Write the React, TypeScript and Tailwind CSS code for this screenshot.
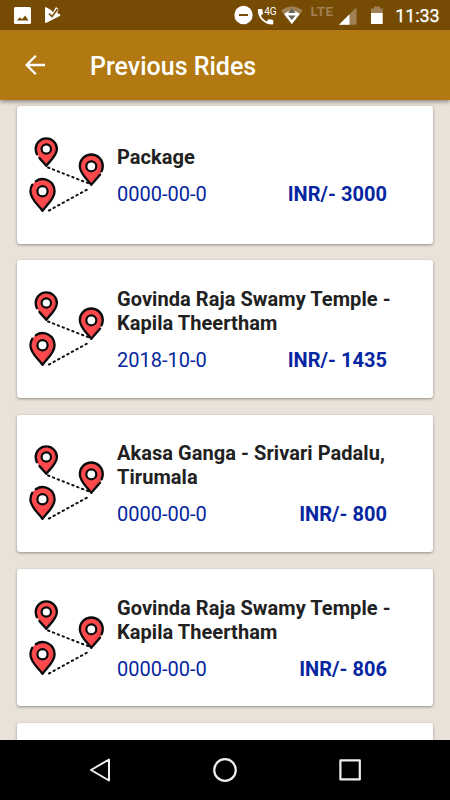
type Ride = {
  title: string
  date: string
  fare: string
}

const rides: Ride[] = [
  { title: 'Package', date: '0000-00-0', fare: 'INR/- 3000' },
  { title: 'Govinda Raja Swamy Temple - Kapila Theertham', date: '2018-10-0', fare: 'INR/- 1435' },
  { title: 'Akasa Ganga - Srivari Padalu, Tirumala', date: '0000-00-0', fare: 'INR/- 800' },
  { title: 'Govinda Raja Swamy Temple - Kapila Theertham', date: '0000-00-0', fare: 'INR/- 806' },
]

// Three map pins joined by dotted lines
const RouteIcon = () => (
  <svg width="76" height="76" viewBox="0 0 76 76" fill="none" className="shrink-0">
    <g stroke="#111111" strokeWidth="2" strokeLinecap="round" strokeDasharray="1.5 3.7">
      <path d="M19 30.5L60 46.5" />
      <path d="M20 73.5L61 51" />
    </g>

    <path d="M17.3 28.8C14.5 24.8 6.7 19 6.7 12A10.6 10.6 0 0 1 27.9 12C27.9 19 20.1 24.8 17.3 28.8Z" fill="#ff4a4d" />
    <path d="M23.5 4.5C26 9 24.5 16 17.3 26.5C21 23 27 18 27 12C27 8 25.5 6 23.5 4.5Z" fill="#e8454a" />
    <path d="M7.9 17.3C7.1 15.6 6.7 13.8 6.7 12A10.6 10.6 0 0 1 27.9 12C27.9 19 20.1 24.8 17.3 28.8C15.9 26.8 12.9 24 10.4 21" stroke="#0a0a0a" strokeWidth="2.3" strokeLinecap="round" strokeLinejoin="round" />
    <circle cx="17.3" cy="12" r="4.7" fill="#fff" stroke="#0a0a0a" strokeWidth="2.2" />

    <path d="M62.3 47.8C59 43 50.8 37 50.8 29A11.5 11.5 0 0 1 73.8 29C73.8 37 65.6 43 62.3 47.8Z" fill="#ff4a4d" />
    <path d="M69 21C72.5 26 70 34 62.3 45.5C66.5 41 73 36 73 29C73 25 71.3 22.7 69 21Z" fill="#e8454a" />
    <path d="M71.1 37.6C68.2 41.4 64 45.3 62.3 47.8C59 43 50.8 37 50.8 29A11.5 11.5 0 0 1 73.8 29C73.8 31 73.3 32.8 72.6 34.4" stroke="#0a0a0a" strokeWidth="2.3" strokeLinecap="round" strokeLinejoin="round" />
    <circle cx="62.3" cy="29.3" r="5" fill="#fff" stroke="#0a0a0a" strokeWidth="2.2" />

    <path d="M13.5 73.8C10 68.6 1.4 62.5 1.4 54.2A12.1 12.1 0 0 1 25.6 54.2C25.6 62.5 17 68.6 13.5 73.8Z" fill="#ff4a4d" />
    <path d="M20.5 46C24.2 51 21.5 59.5 13.5 71.5C18 67 24.7 61.5 24.7 54.2C24.7 50.5 23 47.8 20.5 46Z" fill="#e8454a" />
    <path d="M3.3 47.6C2.1 49.5 1.4 51.8 1.4 54.2C1.4 62.5 10 68.6 13.5 73.8C17 68.6 25.6 62.5 25.6 54.2A12.1 12.1 0 0 0 6.8 44.2" stroke="#0a0a0a" strokeWidth="2.3" strokeLinecap="round" strokeLinejoin="round" />
    <circle cx="13.5" cy="54.3" r="5.1" fill="#fff" stroke="#0a0a0a" strokeWidth="2.2" />
  </svg>
)

function StatusBar() {
  return (
    <div className="flex h-[30px] shrink-0 items-center justify-between bg-[#764c05] pl-[14px] pr-[10px] text-white">
      <div className="flex items-center gap-[13px]">
        <svg width="17" height="17" viewBox="0 0 17 17">
          <rect width="17" height="17" rx="1.5" fill="#fff" />
          <path d="M2.8 13.6L5.8 10.2L8 12.3L11.2 8.6L14.6 13.6Z" fill="#764c05" />
        </svg>
        <svg width="17" height="18" viewBox="0 0 17 18">
          <path d="M1.6 1L7 4L9 6.2L12 1L14.5 3L13.3 7L16.5 8.7L15.8 10L2 17L1 16.5V1.5Z" fill="#fff" />
          <path d="M5 7.6L8 10.6L13.6 3" stroke="#764c05" strokeWidth="1.6" fill="none" />
        </svg>
      </div>

      <svg width="206" height="30" viewBox="234 0 206 30" className="shrink-0" fontFamily="Roboto, sans-serif">
        {/* do not disturb */}
        <circle cx="243.5" cy="15" r="9.2" fill="#fff" />
        <path d="M239 15H248" stroke="#764c05" strokeWidth="2" />

        {/* call over 4G */}
        <path transform="translate(255.2 6.5) scale(0.86)" d="M6.62 10.79c1.44 2.83 3.76 5.14 6.59 6.59l2.2-2.2c.27-.27.67-.36 1.02-.24 1.12.37 2.33.57 3.57.57.55 0 1 .45 1 1V20c0 .55-.45 1-1 1-9.39 0-17-7.61-17-17 0-.55.45-1 1-1h3.5c.55 0 1 .45 1 1 0 1.25.2 2.45.57 3.57.11.35.03.74-.25 1.02l-2.2 2.2z" fill="#fff" />
        <text x="264.2" y="15.2" fontSize="11.5" textLength="12.5" lengthAdjust="spacingAndGlyphs" fill="#fff">4G</text>

        {/* wifi */}
        <path d="M281 10.5Q291.8 2.5 302.7 10.5L291.8 24Z" fill="#9f8155" />
        <path d="M284 14Q291.8 7.5 299.8 14L291.8 24Z" fill="#fff" />
        <path d="M288 13L291.8 8.3L295.6 13Z M288 15.5L291.8 20L295.6 15.5Z" fill="#6b6658" />

        <text x="310.6" y="16" fontSize="13.5" fontWeight="700" textLength="22.5" fill="#9f8155">LTE</text>

        {/* signal */}
        <path d="M356.5 7.2V24.8H339Z" fill="#9f8155" />
        <path d="M349.5 14.2V24.8H339Z" fill="#fff" />

        {/* battery */}
        <path d="M371 8.5H374V6.5H380V8.5H382.7V13H371Z" fill="#9f8155" />
        <path d="M371 13H382.7V24H371Z" fill="#fff" />

        <text x="395.3" y="22" fontSize="18" fontWeight="400" textLength="44.4" fill="#fff" stroke="#fff" strokeWidth="0.25">11:33</text>
      </svg>
    </div>
  )
}

function AppBar() {
  return (
    <header className="relative z-10 flex h-[70px] shrink-0 items-center bg-[#b27912] pl-[25px] text-white shadow-[0_2px_4px_rgba(0,0,0,0.38)]">
      <svg width="20" height="20" viewBox="0 0 20 20" fill="none" stroke="#fff" strokeWidth="2.3">
        <path d="M20 10H1.8M10.8 .8L1.6 10L10.8 19.2" />
      </svg>
      <h1 className="ml-[45px] mt-[3px] text-[25px] font-medium leading-8">Previous Rides</h1>
    </header>
  )
}

const cardShadow = 'shadow-[0_1px_3px_rgba(0,0,0,0.38)]'

function RideCard({ ride }: { ride: Ride }) {
  return (
    <div className={`flex h-[137.5px] shrink-0 items-center rounded-[3px] bg-white pl-3 pr-10 ${cardShadow}`}>
      <RouteIcon />
      <div className="ml-3 flex-1 pt-px">
        <div className="text-[20px] font-bold leading-6 tracking-[0.055px] text-[#212121]">
          {ride.title}
        </div>
        <div className="mr-1.5 mt-[13px] flex justify-between text-[20px] leading-6 text-[#0526a0]">
          <span>{ride.date}</span>
          <span className="font-bold tracking-[0.04px]">{ride.fare}</span>
        </div>
      </div>
    </div>
  )
}

function NavBar() {
  return (
    <nav className="flex h-[60px] shrink-0 items-center justify-between bg-black pl-[89px] pr-[88px]">
      <svg width="22" height="24" viewBox="0 0 22 24" fill="none" stroke="#eee" strokeWidth="2" strokeLinejoin="round">
        <path d="M20 1.5V22.5L2 12Z" />
      </svg>
      <svg width="24" height="24" viewBox="0 0 24 24" fill="none" stroke="#eee" strokeWidth="2.2">
        <circle cx="12" cy="12" r="10.8" />
      </svg>
      <svg width="24" height="24" viewBox="0 0 24 24" fill="none" stroke="#eee" strokeWidth="2.2" strokeLinejoin="round">
        <path d="M2.4 2.4H21.8V21.4H2.4Z" />
      </svg>
    </nav>
  )
}

export default function App() {
  return (
    <div className="flex h-[800px] w-[450px] flex-col overflow-hidden bg-[#e9e2d9] font-[Roboto,sans-serif]">
      <StatusBar />
      <AppBar />
      <main className="flex min-h-0 flex-1 flex-col gap-[16.75px] overflow-hidden px-[17px] pt-[6px]">
        {rides.map((ride, i) => (
          <RideCard key={i} ride={ride} />
        ))}
        <div className={`h-[137.5px] shrink-0 rounded-[3px] bg-white ${cardShadow}`} />
      </main>
      <NavBar />
    </div>
  )
}
